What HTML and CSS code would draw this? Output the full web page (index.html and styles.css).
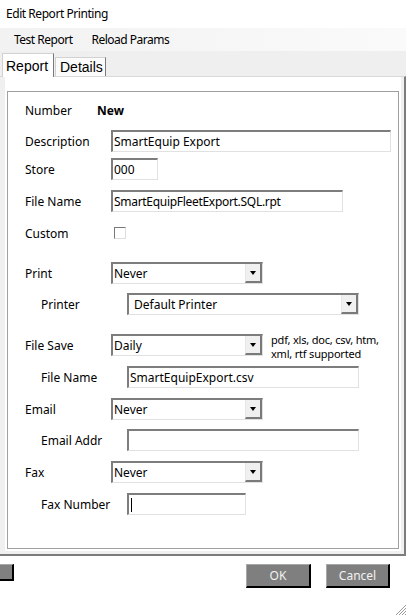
FILE: index.html
```html
<!DOCTYPE html>
<html>
<head>
<meta charset="utf-8">
<title>Edit Report Printing</title>
<link rel="stylesheet" href="styles.css">
</head>
<body>
<div class="window">
  <div class="titlebar">Edit Report Printing</div>
  <div class="menubar">
    <span class="menu-item">Test Report</span>
    <span class="menu-item">Reload Params</span>
  </div>
  <div class="tabstrip">
    <div class="tab tab-active">Report</div>
    <div class="tab tab-details">Details</div>
  </div>
  <div class="tabpage">
    <div class="page-inner">
      <div class="group">
        <div class="row row-first">
          <span class="label label-number">Number</span>
          <span class="value-new">New</span>
        </div>
        <div class="row row-gap9">
          <span class="label">Description</span>
          <div class="field w-full">SmartEquip Export</div>
        </div>
        <div class="row row-gap6">
          <span class="label">Store</span>
          <div class="field w-store">000</div>
        </div>
        <div class="row">
          <span class="label">File Name</span>
          <div class="field w-long field-tight">SmartEquipFleetExport.SQL.rpt</div>
        </div>
        <div class="row">
          <span class="label">Custom</span>
          <span class="checkbox"></span>
        </div>
        <div class="row row-section">
          <span class="label">Print</span>
          <div class="select w-select"><span class="select-text">Never</span><span class="select-btn"><span class="arrow"></span></span></div>
        </div>
        <div class="row row-sub row-gap9">
          <span class="label">Printer</span>
          <div class="select w-long"><span class="select-text select-text-wide">Default Printer</span><span class="select-btn"><span class="arrow"></span></span></div>
        </div>
        <div class="row row-section-b">
          <span class="label">File Save</span>
          <div class="select w-select"><span class="select-text">Daily</span><span class="select-btn"><span class="arrow"></span></span></div>
          <div class="note">pdf, xls, doc, csv, htm,<br>xml, rtf supported</div>
        </div>
        <div class="row row-sub">
          <span class="label">File Name</span>
          <div class="field w-long">SmartEquipExport.csv</div>
        </div>
        <div class="row">
          <span class="label">Email</span>
          <div class="select w-select"><span class="select-text">Never</span><span class="select-btn"><span class="arrow"></span></span></div>
        </div>
        <div class="row row-sub row-gap9">
          <span class="label">Email Addr</span>
          <div class="field w-long"></div>
        </div>
        <div class="row">
          <span class="label">Fax</span>
          <div class="select w-select"><span class="select-text">Never</span><span class="select-btn"><span class="arrow"></span></span></div>
        </div>
        <div class="row row-sub">
          <span class="label">Fax Number</span>
          <div class="field w-short"><span class="caret"></span></div>
        </div>
      </div>
    </div>
  </div>
  <div class="footer">
    <div class="buttons">
      <div class="btn-small"></div>
      <div class="spacer"></div>
      <div class="btn btn-ok">OK</div>
      <div class="btn btn-cancel">Cancel</div>
    </div>
    <svg class="grip" width="11" height="11" viewBox="0 0 11 11">
      <line x1="11" y1="1" x2="1" y2="11" stroke="#9a9a9a" stroke-width="1"/>
      <line x1="11" y1="4" x2="4" y2="11" stroke="#9a9a9a" stroke-width="1"/>
      <line x1="11" y1="7" x2="7" y2="11" stroke="#9a9a9a" stroke-width="1"/>
      <line x1="11" y1="10" x2="10" y2="11" stroke="#9a9a9a" stroke-width="1"/>
    </svg>
  </div>
</div>
</body>
</html>
```
FILE: styles.css
```css
* { box-sizing: border-box; }
body { margin: 0; background: #fff; }
.window {
  width: 406px; height: 615px; overflow: hidden;
  display: flex; flex-direction: column;
  font-family: "Noto Sans", "Open Sans", sans-serif;
  font-size: 12px; color: #000; background: #fff;
}
.titlebar {
  height: 28px; flex: none; display: flex; align-items: center;
  padding-left: 6px; padding-bottom: 2px; font-size: 12px; letter-spacing: -0.45px; background: #fff;
}
.menubar {
  height: 23px; flex: none; display: flex; align-items: center;
  padding-left: 14px; gap: 19px; letter-spacing: -0.5px;
  background: linear-gradient(to right, #f2f2f2, #fafafa);
}
.tabstrip {
  height: 25px; flex: none; display: flex; align-items: flex-end;
  padding-left: 2px; gap: 1px; background: #efefef;
}
.tab {
  position: relative; z-index: 1;
  font-family: "Liberation Sans", Arial, sans-serif; font-size: 14px;
  display: flex; align-items: center;
  background: #fff;
  border: 1px solid #d2d2d2; border-right-color: #7a7a7a; border-bottom: none;
}
.tab-active { width: 52px; height: 24px; padding-left: 3px; margin-bottom: -1px; }
.tab-details { width: 51px; height: 19px; padding-left: 4px; background: #fbfbfb; }
.tabpage {
  height: 480px; flex: none;
  border-top: 1px solid #d9d9d9;
  border-right: 2px solid #7c7c7c;
  border-bottom: 2px solid #7c7c7c;
  background: #f0f0f0;
  padding: 0 3px 3px 5px;
}
.page-inner {
  height: 474px; background: #fff; padding: 14px 2px 2px;
}
.group {
  height: 458px; border: 1px solid #a0a0a0;
  display: flex; flex-direction: column;
}
.row {
  height: 22px; flex: none; display: flex; align-items: center;
  padding-left: 17px; margin-top: 10px;
}
.row-first { margin-top: 7px; }
.row-gap9 { margin-top: 9px; }
.row-gap6 { margin-top: 6px; }
.row-section { margin-top: 18px; }
.row-section-b { margin-top: 19px; }
.row-sub { padding-left: 33px; }
.label { width: 86px; flex: none; }
.label-number { width: 72px; }
.value-new { font-weight: bold; }
.field, .select {
  height: 22px; flex: none; background: #fff;
  border-style: solid; border-width: 2px 1px 1px 2px;
  border-color: #7d7d7d #e1e1e1 #e1e1e1 #7d7d7d;
}
.field { display: flex; align-items: center; padding-left: 1px; }
.field-tight { letter-spacing: -0.3px; }
.select { display: flex; align-items: stretch; }
.select-text { flex: 1; display: flex; align-items: center; padding-left: 1px; }
.select-text-wide { padding-left: 5px; }
.select-btn {
  width: 17px; flex: none; background: #f0f0f0;
  border-style: solid; border-width: 0 2px 2px 1px;
  border-color: #f0f0f0 #7a7a7a #7a7a7a #e6e6e6;
  display: flex; align-items: center; justify-content: center;
}
.arrow {
  width: 1px; height: 0;
  border-top: 4px solid #000;
  border-left: 3px solid transparent; border-right: 3px solid transparent;
  margin-top: 1px;
}
.w-full { width: 280px; }
.w-store { width: 47px; }
.w-long { width: 232px; }
.w-select { width: 152px; }
.w-short { width: 119px; }
.checkbox {
  width: 12px; height: 12px; margin-left: 3px; margin-top: -1px;
  border: 1px solid; border-color: #7a7a7a #dedede #dedede #7a7a7a;
  background: #fff;
}
.note {
  align-self: flex-start; margin-left: 8px;
  font-size: 11px; letter-spacing: -0.2px; line-height: 14px; margin-top: -1px;
}
.caret { width: 1px; height: 14px; background: #000; margin-left: 1px; }
.footer { flex: 1; display: flex; flex-direction: column; }
.buttons {
  display: flex; align-items: flex-start; margin-top: 8px; padding-right: 16px; gap: 15px;
}
.spacer { flex: 1; }
.btn-small {
  width: 14px; height: 17px; background: #808080;
  border-style: solid; border-width: 1px 2px 2px 0;
  border-color: #a8a8a8 #000 #000 #a8a8a8;
}
.btn {
  width: 65px; height: 24px; background: #7f7f7f; color: #f2f2f2;
  border-style: solid; border-width: 1px 2px 2px 1px;
  border-color: #a8a8a8 #000 #000 #a8a8a8;
  display: flex; align-items: center; justify-content: center;
}
.btn-cancel { width: 64px; }
.grip { margin-top: auto; align-self: flex-end; display: block; }
```
